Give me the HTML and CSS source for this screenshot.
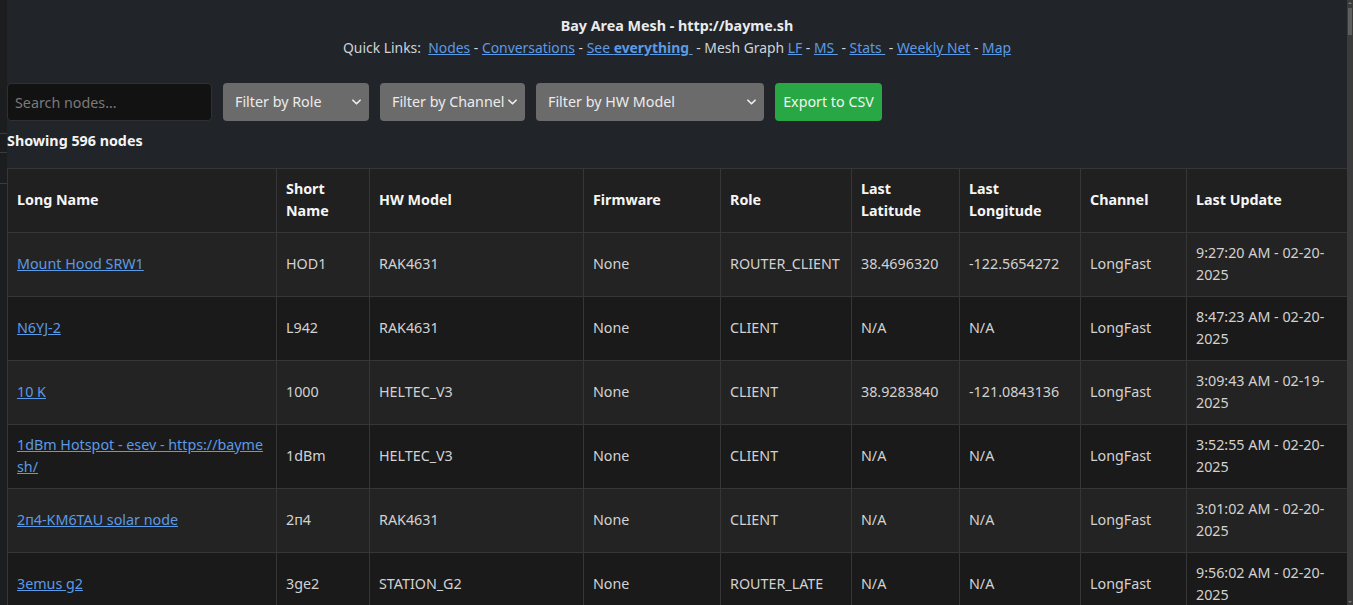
FILE: index.html
```html
<!DOCTYPE html>
<html lang="en">
<head>
<meta charset="utf-8">
<title>Bay Area Mesh - Nodes</title>
<link rel="stylesheet" href="styles.css">
</head>
<body>
<div class="edge">
  <span class="edge-line l1"></span>
  <span class="edge-line l2"></span>
  <span class="edge-line l3"></span>
</div>
<main class="page">
  <header class="top">
    <div class="title">Bay Area Mesh - http://bayme.sh</div>
    <div class="links">Quick Links:&nbsp; <a href="#">Nodes</a> - <a href="#">Conversations</a> - <a href="#">See <b>everything</b>&nbsp;</a> - Mesh Graph <a href="#">LF</a> - <a href="#">MS&nbsp;</a> - <a href="#">Stats&nbsp;</a> - <a href="#">Weekly Net</a> - <a href="#">Map</a></div>
  </header>
  <div class="filters">
    <input class="search" type="text" placeholder="Search nodes...">
    <div class="sel w-role">Filter by Role<svg class="chev" viewBox="0 0 10 6"><path d="M1 1l4 4 4-4" fill="none" stroke="currentColor" stroke-width="1.8" stroke-linecap="round" stroke-linejoin="round"/></svg></div>
    <div class="sel w-chan">Filter by Channel<svg class="chev" viewBox="0 0 10 6"><path d="M1 1l4 4 4-4" fill="none" stroke="currentColor" stroke-width="1.8" stroke-linecap="round" stroke-linejoin="round"/></svg></div>
    <div class="sel w-hw">Filter by HW Model<svg class="chev" viewBox="0 0 10 6"><path d="M1 1l4 4 4-4" fill="none" stroke="currentColor" stroke-width="1.8" stroke-linecap="round" stroke-linejoin="round"/></svg></div>
    <button class="export">Export to CSV</button>
  </div>
  <div class="count">Showing 596 nodes</div>
  <table class="nodes">
    <colgroup>
      <col class="c1"><col class="c2"><col class="c3"><col class="c4"><col class="c5"><col class="c6"><col class="c7"><col class="c8"><col class="c9">
    </colgroup>
    <thead>
      <tr><th>Long Name</th><th>Short Name</th><th>HW Model</th><th>Firmware</th><th>Role</th><th>Last Latitude</th><th>Last Longitude</th><th>Channel</th><th>Last Update</th></tr>
    </thead>
    <tbody>
      <tr class="odd"><td><a href="#">Mount Hood SRW1</a></td><td>HOD1</td><td>RAK4631</td><td>None</td><td>ROUTER_CLIENT</td><td>38.4696320</td><td>-122.5654272</td><td>LongFast</td><td>9:27:20 AM - 02-20-2025</td></tr>
      <tr class="even"><td><a href="#">N6YJ-2</a></td><td>L942</td><td>RAK4631</td><td>None</td><td>CLIENT</td><td>N/A</td><td>N/A</td><td>LongFast</td><td>8:47:23 AM - 02-20-2025</td></tr>
      <tr class="odd"><td><a href="#">10 K</a></td><td>1000</td><td>HELTEC_V3</td><td>None</td><td>CLIENT</td><td>38.9283840</td><td>-121.0843136</td><td>LongFast</td><td>3:09:43 AM - 02-19-2025</td></tr>
      <tr class="even"><td><a href="#">1dBm Hotspot - esev - https://bayme<br>sh/</a></td><td>1dBm</td><td>HELTEC_V3</td><td>None</td><td>CLIENT</td><td>N/A</td><td>N/A</td><td>LongFast</td><td>3:52:55 AM - 02-20-2025</td></tr>
      <tr class="odd"><td><a href="#">2п4-KM6TAU solar node</a></td><td>2п4</td><td>RAK4631</td><td>None</td><td>CLIENT</td><td>N/A</td><td>N/A</td><td>LongFast</td><td>3:01:02 AM - 02-20-2025</td></tr>
      <tr class="even"><td><a href="#">3emus g2</a></td><td>3ge2</td><td>STATION_G2</td><td>None</td><td>ROUTER_LATE</td><td>N/A</td><td>N/A</td><td>LongFast</td><td>9:56:02 AM - 02-20-2025</td></tr>
    </tbody>
  </table>
</main>
<div class="scrollbar"><span class="arrow-up"></span><span class="thumb"></span><span class="arrow-down"></span></div>
</body>
</html>
```

FILE: styles.css
```css
html, body {
  margin: 0;
  height: 100%;
  overflow: hidden;
}
body {
  display: flex;
  background: #212529;
  color: #dee2e6;
  font-family: "Noto Sans", "Open Sans", sans-serif;
  font-size: 14.3px;
  line-height: 22px;
}
.edge {
  position: relative;
  width: 7px;
  flex: none;
  background: #1c1d1f;
}
.edge-line {
  position: absolute;
  left: 0;
  width: 7px;
  height: 1px;
  background: #3a3b3d;
}
.l1 { top: 133px; }
.l2 { top: 152px; }
.l3 { top: 183px; }
.page {
  width: 1340px;
  flex: none;
}
.top {
  text-align: center;
  padding-top: 15px;
}
.title {
  font-weight: 700;
  color: #e9ecef;
}
.links {
  color: #ced4da;
  font-size: 13.9px;
}
a {
  color: #5b9ae6;
  text-decoration: underline;
}
.links b {
  font-weight: 700;
}
.filters {
  display: flex;
  gap: 11px;
  margin-top: 24px;
  height: 38px;
}
.search {
  width: 205px;
  height: 38px;
  box-sizing: border-box;
  background: #121212;
  border: 1px solid #2e3033;
  border-radius: 4px;
  padding: 0 0 0 7px;
  color: #ddd;
  font: inherit;
  outline: none;
}
.search::placeholder {
  color: #7a7a7a;
}
.sel {
  display: flex;
  align-items: center;
  justify-content: space-between;
  box-sizing: border-box;
  height: 38px;
  padding: 0 8px 0 12px;
  background: #6b6b6b;
  border-radius: 4px;
  color: #ececec;
}
.chev {
  width: 9px;
  height: 6px;
  color: #f0f0f0;
}
.w-role { width: 146px; }
.w-chan { width: 145px; }
.w-hw { width: 228px; }
.export {
  height: 38px;
  width: 107px;
  padding: 0;
  background: #28a745;
  border: none;
  border-radius: 4px;
  color: #eef8ee;
  font: inherit;
}
.count {
  font-weight: 700;
  color: #f3f3f3;
  margin-top: 9px;
}
.nodes {
  margin-top: 16px;
  width: 1340px;
  table-layout: fixed;
  border-collapse: collapse;
  color: #d2d2d2;
}
.c1 { width: 269px; }
.c2 { width: 93px; }
.c3 { width: 214px; }
.c4 { width: 137px; }
.c5 { width: 131px; }
.c6 { width: 108px; }
.c7 { width: 121px; }
.c8 { width: 106px; }
.c9 { width: 161px; }
.nodes th, .nodes td {
  border: 1px solid #363636;
  padding: 9px 10px 10px 9px;
  text-align: left;
  vertical-align: middle;
  height: 44px;
}
.nodes th {
  background: #202020;
  color: #f5f5f5;
  font-weight: 700;
}
.odd td { background: #232323; }
.even td { background: #1a1a1a; }
.scrollbar {
  position: relative;
  width: 6px;
  flex: none;
  background: #3b3b3b;
}
.thumb {
  position: absolute;
  left: 1px;
  top: 8px;
  width: 4px;
  height: 27px;
  background: #5e5e5e;
}
.arrow-up, .arrow-down {
  position: absolute;
  left: 1px;
  width: 0;
  height: 0;
  border-left: 2px solid transparent;
  border-right: 2px solid transparent;
}
.arrow-up { top: 2px; border-bottom: 2px solid #777; }
.arrow-down { bottom: 2px; border-top: 2px solid #777; }
```
